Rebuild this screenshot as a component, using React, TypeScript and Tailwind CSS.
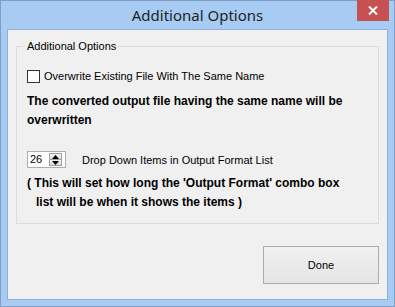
export default function App() {
  return (
    <div className="flex h-[307px] w-[395px] flex-col border border-[#7f9fc9] bg-[#a7cbf2] font-['Liberation_Sans',Arial,sans-serif] text-[11px] text-black">
      {/* Title bar */}
      <div className="relative flex h-[28px] shrink-0 items-center justify-center">
        <span className="font-['Noto_Sans',sans-serif] text-[15px] leading-none text-[#1f1f1f]">Additional Options</span>
        <button
          type="button"
          className="absolute right-[5px] top-[-1px] flex h-[21px] w-[32px] items-center justify-center bg-[#c75050]"
        >
          <svg width="10" height="9" viewBox="0 0 10 9">
            <path d="M1 0.5 L9 8.5 M9 0.5 L1 8.5" stroke="white" strokeWidth="2" />
          </svg>
        </button>
      </div>

      {/* Client area */}
      <div className="mx-[6px] mb-[6px] flex flex-1 flex-col border border-[#8fb0d8] bg-[#f0f0f0] px-[8px] pt-[10px]">
        <fieldset className="border border-[#dcdcdc] px-[10px] pb-[11px] pt-[17px]">
          <legend className="-ml-[2px] px-[2px] leading-[13px]">Additional Options</legend>

          <label className="flex h-[13px] items-center gap-[4px]">
            <span className="h-[13px] w-[13px] border border-[#333] bg-white" />
            <span className="leading-[13px]">Overwrite Existing File With The Same Name</span>
          </label>

          <p className="mt-[9px] text-[12px] font-bold leading-[19px]">
            The converted output file having the same name will be
            <br />
            overwritten
          </p>

          <div className="mt-[21px] flex h-[17px] items-center">
            <div className="flex h-[17px] w-[39px] items-center justify-between border border-[#abadb3] bg-white pl-[2px] pr-[3px]">
              <span className="leading-[13px]">26</span>
              <div className="flex flex-col">
                <div className="flex h-[7px] w-[13px] items-center justify-center border border-[#a0a0a0] bg-gradient-to-b from-[#f4f4f4] to-[#dcdcdc]">
                  <svg width="7" height="4" viewBox="0 0 7 4">
                    <path d="M3.5 0 L7 4 L0 4 Z" fill="black" />
                  </svg>
                </div>
                <div className="-mt-px flex h-[7px] w-[13px] items-center justify-center border border-[#a0a0a0] bg-gradient-to-b from-[#f4f4f4] to-[#dcdcdc]">
                  <svg width="7" height="4" viewBox="0 0 7 4">
                    <path d="M0 0 L7 0 L3.5 4 Z" fill="black" />
                  </svg>
                </div>
              </div>
            </div>
            <span className="ml-[16px] pt-[2px] leading-[13px]">Drop Down Items in Output Format List</span>
          </div>

          <p className="mt-[6px] text-[12px] font-bold leading-[19px]">
            ( This will set how long the 'Output Format' combo box
            <br />
            <span className="pl-[9px]">list will be when it shows the items )</span>
          </p>
        </fieldset>

        <div className="mt-[22px] flex justify-end">
          <button
            type="button"
            className="h-[38px] w-[116px] border border-[#acacac] bg-gradient-to-b from-[#f0f0f0] to-[#e5e5e5] text-[11px]"
          >
            Done
          </button>
        </div>
      </div>
    </div>
  );
}
